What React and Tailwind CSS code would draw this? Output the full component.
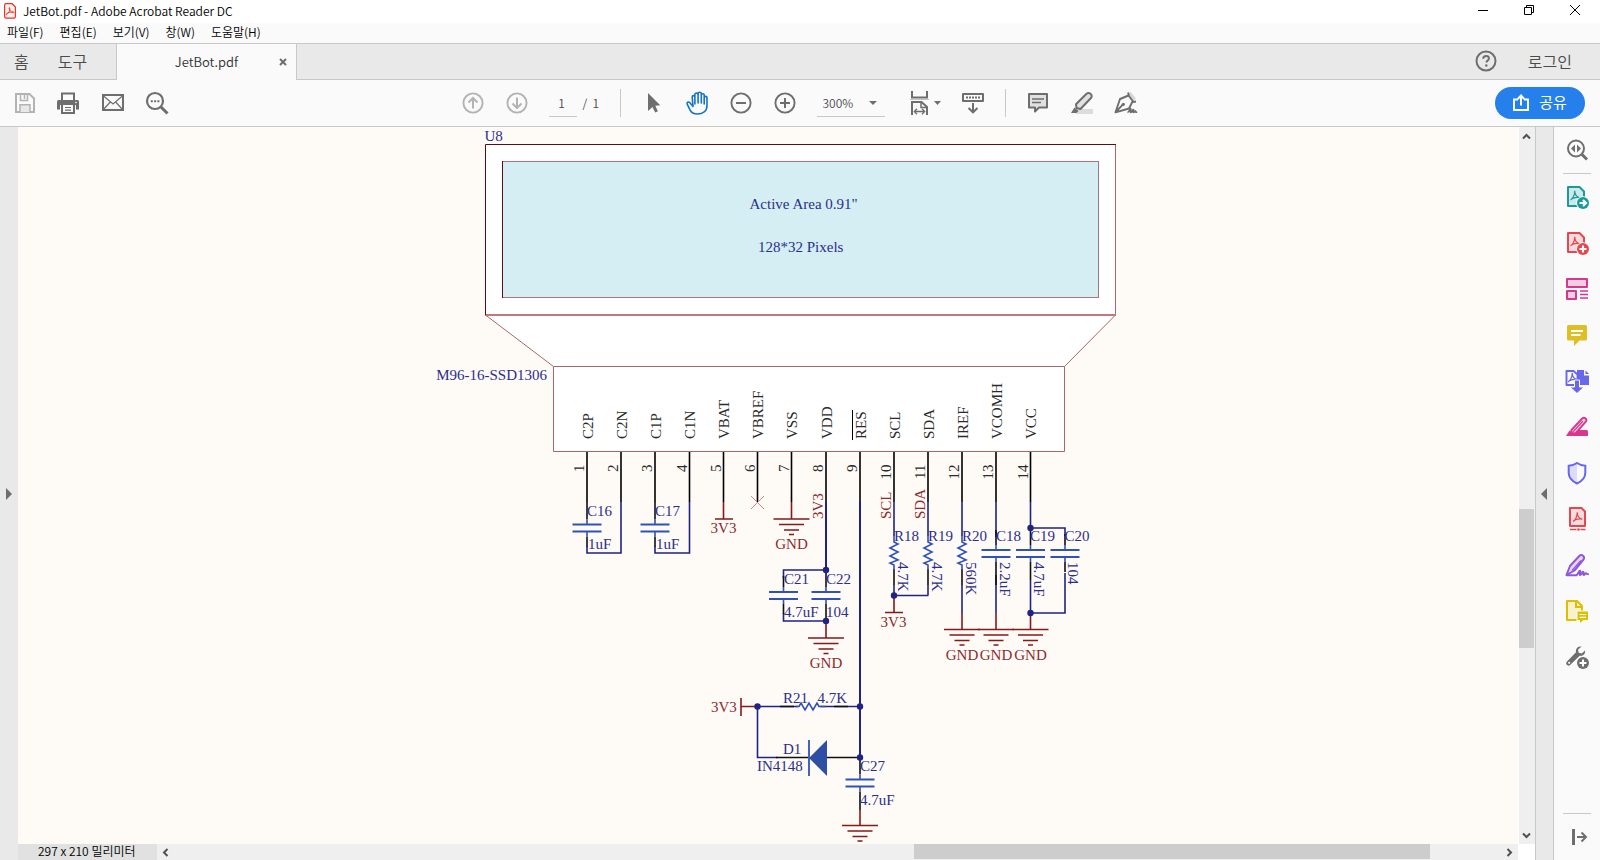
import React from 'react';

/* ---------- shared pieces ---------- */

function IconButton({ label, children, className = 'w-11' }) {
  return (
    <button type="button" aria-label={label} className={`flex h-full shrink-0 items-center justify-center ${className}`}>
      {children}
    </button>
  );
}

function Svg({ size = 24, children, className = '' }) {
  return (
    <svg width={size} height={size} viewBox={`0 0 ${size} ${size}`} fill="none" className={className} aria-hidden="true">
      {children}
    </svg>
  );
}

const G = '#6e6e6e';

/* ---------- title, menu and tabs ---------- */

function TitleBar() {
  return (
    <header className="flex h-[23px] shrink-0 items-start bg-white pl-1 pr-0.5 text-black">
      <svg width="12" height="16" viewBox="0 0 12 16" fill="none" className="mt-[3px]" aria-hidden="true">
        <path d="M2 .7h6L11.4 4v9.6a1.6 1.6 0 0 1-1.6 1.6H2.2A1.6 1.6 0 0 1 .6 13.600V2.200A1.500 1.500 0 0 1 2 .7z" fill="#fff3f1" stroke="#ee3124" strokeWidth="1.200" />
        <path d="M2.500 11.400c1.400-.5 3.700-3.600 3.400-6.200-.2-1-1-.6-.7.4.4 1.800 2.200 4 4 4.200.9 0 .9-.9 0-1-1.700-.2-5 .8-6.500 1.800-.6.4-.7.9-.2.8z" stroke="#ee3124" strokeWidth=".9" />
      </svg>
      <h1 className="flex-1 pl-[7px] text-[12px] font-[350] leading-[22px]">JetBot.pdf - Adobe Acrobat Reader DC</h1>
      <div className="flex h-5">
        <IconButton label="최소화" className="w-[46px]">
          <Svg size={12}><path d="M1 6.500h10" stroke="#000" /></Svg>
        </IconButton>
        <IconButton label="이전 크기로 복원" className="w-[46px]">
          <Svg size={12}>
            <path d="M1.500 3.500h7v7h-7zM3.500 3.500v-2h7v7h-2" stroke="#000" />
          </Svg>
        </IconButton>
        <IconButton label="닫기" className="w-[46px]">
          <Svg size={12}><path d="M1 1l10 10M11 1L1 11" stroke="#000" /></Svg>
        </IconButton>
      </div>
    </header>
  );
}

function MenuBar() {
  return (
    <nav className="flex h-5 shrink-0 items-start gap-4 bg-[#fafafa] pl-[7px] text-[12px] font-[350] leading-[18px] text-black">
      {['파일(F)', '편집(E)', '보기(V)', '창(W)', '도움말(H)'].map((m) => (
        <button key={m} type="button">{m}</button>
      ))}
    </nav>
  );
}

function TabBar() {
  return (
    <div className="flex h-[37px] shrink-0 border-t border-[#c8c8c8] bg-[#e9e9e9] font-[350] text-[#4b4b4b]">
      <div className="flex w-[117px] items-center gap-[29px] border-b border-r border-[#c8c8c8] pb-0.5 pl-3.5 text-[16px] leading-6">
        <button type="button">홈</button>
        <button type="button">도구</button>
      </div>
      <div className="flex w-[179px] items-center bg-[#fafafa]">
        <button type="button" className="flex-1 pl-[18px] text-center text-[13px] leading-6 text-[#323232]">JetBot.pdf</button>
        <button type="button" aria-label="탭 닫기" className="mr-2 flex h-6 w-2.5 items-center justify-center">
          <Svg size={8}><path d="M1 1l6 6M7 1L1 7" stroke={G} strokeWidth="2" /></Svg>
        </button>
      </div>
      <div className="flex flex-1 items-center justify-end gap-[31px] border-b border-l border-[#c8c8c8] pb-0.5 pr-7">
        <button type="button" aria-label="도움말">
          <Svg size={22}>
            <circle cx="11" cy="11" r="9.500" stroke={G} strokeWidth="2" />
            <path d="M8.200 8.700c.1-1.700 1.300-2.600 2.900-2.600s2.800.9 2.800 2.300c0 2-2.400 2.200-2.400 4" stroke={G} strokeWidth="2" />
            <circle cx="11.300" cy="15.500" r="1.200" fill={G} />
          </Svg>
        </button>
        <button type="button" className="text-[16px] leading-6">로그인</button>
      </div>
    </div>
  );
}

/* ---------- toolbar ---------- */

function SaveIcon() {
  return (
    <Svg>
      <path d="M3 3h13.500L21 7.500V21H3z" stroke="#b3b3b3" strokeWidth="2" />
      <path d="M7.500 3v6.500h7V3M11.500 4v4" stroke="#b3b3b3" strokeWidth="1.500" />
      <path d="M7 21v-7.200h10V21" fill="#e8e8e8" stroke="#b3b3b3" strokeWidth="1.500" />
    </Svg>
  );
}
function PrintIcon() {
  return (
    <Svg>
      <path d="M5 9V2.500h12V9" stroke={G} strokeWidth="2" />
      <path d="M1.500 9h19A1.500 1.500 0 0 1 22 10.500v8h-3V14H3v4.500H0v-8A1.500 1.500 0 0 1 1.500 9z" fill={G} />
      <path d="M5 14v8h12v-8" fill="#fafafa" stroke={G} strokeWidth="2" />
      <path d="M8 16.500h6M8 19.200h6" stroke={G} strokeWidth="1.200" />
      <circle cx="19" cy="11.500" r=".8" fill="#fff" />
    </Svg>
  );
}
function MailIcon() {
  return (
    <Svg>
      <path d="M2 4h20v15H2z" stroke={G} strokeWidth="2" />
      <path d="M2 4.500l10 8.500 10-8.500M2.500 18.500L9.300 11M21.500 18.500L14.700 11" stroke={G} strokeWidth="1.200" />
    </Svg>
  );
}
function FindIcon() {
  return (
    <Svg>
      <circle cx="10" cy="10" r="8" stroke={G} strokeWidth="2.200" />
      <path d="M15.500 15.500l7 7" stroke={G} strokeWidth="3" />
      <path d="M5.800 9.200h2v2h-2zM9.100 9.200h2v2h-2zM12.400 9.200h2v2h-2z" fill={G} />
    </Svg>
  );
}
function Circled({ color = G, d }) {
  return (
    <Svg>
      <circle cx="12" cy="12" r="9.600" stroke={color} strokeWidth="1.900" />
      <path d={d} stroke={color} strokeWidth="2" />
    </Svg>
  );
}
function HandIcon() {
  return (
    <Svg>
      <path
        d="M8 15.500L4.700 11.600c-1.200-1.300-3.300-.1-2.500 1.600l2.900 5.900c1.400 2.600 3.700 3.900 7.200 3.900 5.300 0 9.700-2.700 9.700-8.500V6.800c0-1.900-2.700-1.900-2.800 0V13M19.200 7.500V4.100c0-1.900-2.900-1.900-2.900 0V12M16.300 5V2.600c0-1.900-3.200-1.900-3.200 0V12M13.100 4V3.500c0-1.900-3.200-1.900-3.200 0V13M9.900 6c0-1.900-2.700-1.900-2.700.1l.8 9.400"
        stroke="#1473c8" strokeWidth="1.600" strokeLinejoin="round" strokeLinecap="round"
      />
    </Svg>
  );
}

function Toolbar() {
  return (
    <div className="grid h-[47px] shrink-0 grid-cols-[1fr_auto_1fr] items-center border-b border-[#c8c8c8] bg-[#fafafa] text-[#4b4b4b]">
      <div className="flex h-11 pl-[3px]">
        <IconButton label="저장"><SaveIcon /></IconButton>
        <IconButton label="인쇄"><PrintIcon /></IconButton>
        <IconButton label="전자 메일"><MailIcon /></IconButton>
        <IconButton label="찾기"><FindIcon /></IconButton>
      </div>

      <div className="flex h-11 items-center pr-0.5 text-[12px] font-[350]">
        <IconButton label="이전 페이지"><Circled color="#b3b3b3" d="M12 17.500V7.500M7.500 11.500L12 7l4.500 4.500" /></IconButton>
        <IconButton label="다음 페이지"><Circled color="#b3b3b3" d="M12 6.500v10M7.500 12.500L12 17l4.500-4.500" /></IconButton>
        <input aria-label="페이지 번호" defaultValue="1" className="ml-2.5 h-7 w-7 border-b border-[#c8c8c8] bg-transparent pr-0.5 text-center outline-none" />
        <span className="w-[43px] whitespace-pre pl-1.5">/  1</span>
        <span className="mr-2.5 h-7 w-px bg-[#c8c8c8]" />
        <IconButton label="선택 도구">
          <Svg><path d="M7 2v18l4.500-4 2.700 5.500 2.700-1.300-2.600-5.400 4.900-.6z" fill={G} /></Svg>
        </IconButton>
        <IconButton label="손 도구"><HandIcon /></IconButton>
        <IconButton label="축소"><Circled d="M7 12h10" /></IconButton>
        <IconButton label="확대"><Circled d="M7 12h10M12 7v10" /></IconButton>
        <div className="relative mx-2.5 h-7 w-[68px] border-b border-[#c8c8c8]">
          <select aria-label="확대/축소 비율" defaultValue="300%" className="h-full w-full appearance-none bg-transparent pl-1.5 outline-none">
            <option>100%</option>
            <option>200%</option>
            <option>300%</option>
          </select>
          <svg width="8" height="4" viewBox="0 0 8 4" className="pointer-events-none absolute right-2 top-3" aria-hidden="true">
            <path d="M0 0h8L4 4z" fill={G} />
          </svg>
        </div>
        <IconButton label="페이지 맞춤" className="w-14 pl-1">
          <svg width="32" height="26" viewBox="0 0 32 26" fill="none" aria-hidden="true">
            <path d="M3 1v6.500h15V1" stroke={G} strokeWidth="2" />
            <path d="M1 9.500h19" stroke="#c4c4c4" />
            <path d="M3 25V12h9.500l5.500 5v8" stroke={G} strokeWidth="2" />
            <path d="M12 12v5.500h6" stroke={G} strokeWidth="1.500" />
            <path d="M5.500 21.500h10M8 18.800l-2.700 2.700L8 24.200M13 18.800l2.700 2.700-2.700 2.700" stroke={G} strokeWidth="1.300" />
            <path d="M25 11h7l-3.500 4z" fill={G} />
          </svg>
        </IconButton>
        <IconButton label="읽기 모드">
          <Svg>
            <path d="M2 3h20v7H2z" stroke={G} strokeWidth="2" strokeLinejoin="round" />
            <path d="M5 6.500h14" stroke={G} strokeWidth="2" strokeDasharray="2 1" />
            <path d="M12 12v9M7.500 17l4.500 4.300 4.500-4.300" stroke={G} strokeWidth="2" />
          </Svg>
        </IconButton>
        <span className="mx-2.5 h-7 w-px bg-[#c8c8c8]" />
        <IconButton label="스티커 메모 추가">
          <Svg>
            <path d="M3 3h18v13.500h-8l-4 4v-4H3z" fill="#e1e1e1" stroke={G} strokeWidth="2" strokeLinejoin="round" />
            <path d="M6 8h12M6 11.500h9" stroke={G} strokeWidth="1.300" />
          </Svg>
        </IconButton>
        <IconButton label="텍스트 강조 표시">
          <Svg>
            <path d="M6 18h17v5H6z" fill="#dcdcdc" />
            <path d="M6 13.200L16.500 2.800c2.700-2.200 6.400.9 4.700 4L10.500 18l-4-1z" fill="#e1e1e1" stroke={G} strokeWidth="2" strokeLinejoin="round" />
            <path d="M4.500 16.500l4 3.500-2 2H1z" fill={G} />
          </Svg>
        </IconButton>
        <IconButton label="서명">
          <Svg>
            <path d="M13.500 3.500l3-2.500 5.500 6.500-2.500 2.300z" fill="#d6d6d6" />
            <path d="M14 1.500l1 3M14.500 4.500L6 8 1.500 21.300l13.500-3.800 3.500-7M14.500 4.500l5 6.500 2.500-.5M1.500 21.300l7-7.500" stroke={G} strokeWidth="1.900" strokeLinejoin="round" />
            <circle cx="9.300" cy="13.300" r="1.600" fill={G} />
            <path d="M13.500 21.500c2-.5 2.300-4.500 3.100-4 1 .5-1 3.800.2 4s1.500-3.300 2.500-3-.8 3 .3 3 1.300-2 1.800-1.500-.3 1.500 1.800 1.200" stroke={G} strokeWidth="1.700" />
          </Svg>
        </IconButton>
      </div>

      <div className="flex justify-end pr-[15px]">
        <button type="button" className="flex h-8 w-[90px] items-center justify-center gap-2.5 rounded-full bg-[#2680eb] pb-0.5 text-[15px] leading-6 text-white">
          <svg width="16" height="17" viewBox="0 0 16 17" fill="none" aria-hidden="true">
            <path d="M5 5.500H1V16h14V5.500h-4M8 11.500V2M4.800 5L8 1.500 11.200 5" stroke="#fff" strokeWidth="1.900" />
          </svg>
          공유
        </button>
      </div>
    </div>
  );
}

/* ---------- schematic ---------- */

const NAVY = '#1f2383';
const INK = '#2b2f8a';
const BLUE = '#3052b8';
const RED = '#85191b';
const RED_INK = '#8e2a2e';

const pins = [
  [587, 'C2P'], [621, 'C2N'], [655, 'C1P'], [689.5, 'C1N'], [723.5, 'VBAT'], [757.5, 'VBREF'], [791.5, 'VSS'],
  [826, 'VDD'], [860, 'RES'], [894, 'SCL'], [928, 'SDA'], [962, 'IREF'], [996, 'VCOMH'], [1030.5, 'VCC'],
];

function T({ x, y, r, anchor, fill = INK, children }) {
  return (
    <text x={x} y={y} fill={fill} textAnchor={anchor} transform={r ? `rotate(${r} ${x} ${y})` : undefined}>
      {children}
    </text>
  );
}

function Wire({ d, c = NAVY, w = 1.600 }) {
  return <path d={d} stroke={c} strokeWidth={w} fill="none" />;
}

function Cap({ x, y, top, bottom }) {
  return (
    <g>
      <Wire c="#101010" d={`M${x} ${top}V${y - 5}M${x} ${y + 12}V${bottom}`} />
      <Wire c={BLUE} d={`M${x} ${y - 5}V${y}M${x} ${y + 7}V${y + 12}`} />
      <Wire c={BLUE} w={1.800} d={`M${x - 14.500} ${y}h29M${x - 14.500} ${y + 7}h29`} />
    </g>
  );
}

function Gnd({ x, y, from, label = true }) {
  return (
    <g>
      <Wire c={RED} d={`M${x} ${from}V${y}`} />
      <Wire c={RED} d={`M${x - 18} ${y}h36M${x - 12.500} ${y + 5.500}h25M${x - 7.500} ${y + 11}h15M${x - 2.500} ${y + 15.500}h5`} />
      {label && <T x={x} y={y + 30} anchor="middle" fill={RED_INK}>GND</T>}
    </g>
  );
}

function Resistor({ x, top, bottom }) {
  return (
    <g>
      <Wire d={`M${x} ${top}V536`} />
      <Wire c="#101010" d={`M${x} 569V585`} />
      <Wire d={`M${x} 585V${bottom}`} />
      <Wire c={BLUE} d={`M${x} 534v8l4 2-8 4 8 4-8 4 8 4-8 3 4 2v5`} />
    </g>
  );
}

function Dot({ x, y }) {
  return <circle cx={x} cy={y} r="3.200" fill={NAVY} />;
}

function Schematic() {
  return (
    <svg viewBox="18 127 1500 717" className="block w-full font-['Liberation_Serif',serif] text-[15px]" role="img" aria-label="M96-16-SSD1306">
      <path d="M485.500 144.500H1115.500V315L1064.500 366.500V451.500H553.500V366.500L485.500 315z" fill="#fff" />
      <rect x="502.500" y="161.500" width="596" height="136" fill="#d4eef4" stroke="#a8757c" />
      <path d="M502.500 161v137" stroke="#5a0d13" />
      <path d="M1115.500 144v171M553.500 451.500v-85h511v85zM485.500 315l68 51.500M1115.500 315l-51 51.500" fill="none" stroke="#a8686b" />
      <path d="M485 315h631" stroke="#c07a7a" strokeWidth="2" />
      <path d="M485.500 315V144.500H1116" fill="none" stroke="#5a0d13" />

      <T x={484.5} y={141}>U8</T>
      <T x={749.5} y={209}>Active Area 0.91"</T>
      <T x={758} y={251.5}>128*32 Pixels</T>
      <T x={547} y={380} anchor="end">M96-16-SSD1306</T>

      {pins.map(([x, name], i) => (
        <g key={name}>
          <Wire c="#000" d={`M${x} 452V502`} />
          <T x={x + 5.5} y={439} r={-90} fill="#2a2a2a">{name}</T>
          <T x={x - 3} y={464.5} r={-90} anchor="end" fill="#2a2a2a">{i + 1}</T>
        </g>
      ))}
      <path d="M852.500 410v30" stroke="#000" />

      {/* charge pump capacitors */}
      <Cap x={587} y={524.500} top={502} bottom={547} />
      <Wire d="M587 546v7h34V502" />
      <T x={587} y={515.5}>C16</T>
      <T x={588} y={549}>1uF</T>
      <Cap x={655} y={524.500} top={502} bottom={547} />
      <Wire d="M655 546v7h34.500V502" />
      <T x={655} y={515.5}>C17</T>
      <T x={656} y={549}>1uF</T>

      {/* VBAT, VBREF, VSS */}
      <Wire c={RED} d="M723.500 502v17M715 519h18" />
      <T x={723.5} y={532.5} anchor="middle" fill={RED_INK}>3V3</T>
      <path d="M751 496l13 13M764 496l-13 13" stroke="#d58289" />
      <Gnd x={791.5} y={519} from={502} />

      {/* VDD decoupling */}
      <Wire w={2} d="M826 502v68" />
      <Wire d="M826 570h-42.500v8M783.500 613v8h42.500" />
      <T x={823} y={519} r={-90} fill={RED_INK}>3V3</T>
      <Cap x={783.5} y={592} top={576} bottom={614} />
      <Cap x={826} y={592} top={570} bottom={621} />
      <Gnd x={826} y={638} from={621} />
      <Dot x={826} y={570} />
      <Dot x={826} y={621} />
      <T x={784} y={583.5}>C21</T>
      <T x={826} y={583.5}>C22</T>
      <T x={784} y={617}>4.7uF</T>
      <T x={826} y={617}>104</T>

      {/* I2C pull-ups */}
      <Resistor x={894} top={502} bottom={595} />
      <Resistor x={928} top={502} bottom={595} />
      <Wire d="M894 595.500h34.500" />
      <Wire c={RED} d="M894 595v17M885 612.500h18" />
      <Dot x={894} y={595.5} />
      <T x={890.5} y={519} r={-90} fill={RED_INK}>SCL</T>
      <T x={925} y={519} r={-90} fill={RED_INK}>SDA</T>
      <T x={894} y={541}>R18</T>
      <T x={928} y={541}>R19</T>
      <T x={898} y={562} r={90}>4.7K</T>
      <T x={932} y={562} r={90}>4.7K</T>
      <T x={893.5} y={626.5} anchor="middle" fill={RED_INK}>3V3</T>

      {/* IREF, VCOMH, VCC */}
      <Resistor x={962} top={502} bottom={613} />
      <Wire d="M996 502v35M996 575v38M1030.500 502v26h34.500v8M1030.500 580v33h34.500v-40" />
      <Cap x={996} y={550} top={530} bottom={585} />
      <Cap x={1030.5} y={550} top={528} bottom={580} />
      <Cap x={1065} y={550} top={534} bottom={572} />
      <Gnd x={962} y={629.500} from={613} />
      <Gnd x={996} y={629.500} from={613} />
      <Gnd x={1030.5} y={629.500} from={613} />
      <Dot x={1030.5} y={528} />
      <Dot x={1030.5} y={613} />
      <T x={962} y={541}>R20</T>
      <T x={996} y={541}>C18</T>
      <T x={1030} y={541}>C19</T>
      <T x={1064.5} y={541}>C20</T>
      <T x={965.5} y={562} r={90}>560K</T>
      <T x={999.5} y={562} r={90}>2.2uF</T>
      <T x={1033.5} y={562} r={90}>4.7uF</T>
      <T x={1067.5} y={562} r={90}>104</T>

      {/* reset network */}
      <Wire w={2} d="M860 502v256" />
      <Wire d="M757.500 706V757.500h20M757.500 706.500H798M820 706.500h40" />
      <Wire c="#101010" d="M776 757.500h32M827 757.500h33M780 706.500h14M834 706.500h14" />
      <Wire c={BLUE} d="M796 706.500h3l2-3.500 4 7 4-7 4 7 4-7 2 3.500h6" />
      <Wire c={RED} d="M741 698v18M741 706.500h16" />
      <path d="M809 758l18-18v36z" fill="#2f4fa5" />
      <Wire c={BLUE} w={1.800} d="M809 740v36" />
      <Cap x={860} y={779.500} top={758} bottom={810} />
      <Gnd x={860} y={825.500} from={810} label={false} />
      <Dot x={757.500} y={706.5} />
      <Dot x={860} y={706.5} />
      <Dot x={860} y={757.500} />
      <T x={711} y={712} fill={RED_INK}>3V3</T>
      <T x={783} y={703}>R21</T>
      <T x={817.5} y={703}>4.7K</T>
      <T x={783} y={754}>D1</T>
      <T x={757} y={771}>IN4148</T>
      <T x={860} y={771}>C27</T>
      <T x={860} y={805}>4.7uF</T>
    </svg>
  );
}

/* ---------- scroll bars ---------- */

function Chevron({ d }) {
  return <Svg size={9}><path d={d} stroke="#505050" strokeWidth="2" /></Svg>;
}

function HorizontalBar() {
  return (
    <div className="flex h-4 shrink-0 bg-[#efefef]">
      <div className="w-[139px] bg-[#e1e1e1] pl-5 text-[12px] font-[350] leading-[14px] text-black">297 x 210 밀리미터</div>
      <button type="button" aria-label="왼쪽으로 스크롤" className="flex w-4 items-center justify-center"><Chevron d="M6.500 1L3 4.500 6.500 8" /></button>
      <div className="flex-[741]" />
      <div className="mb-px flex-[516] bg-[#cdcdcd]" />
      <div className="flex-[71]" />
      <button type="button" aria-label="오른쪽으로 스크롤" className="flex w-[17px] items-center justify-center"><Chevron d="M2.500 1L6 4.500 2.500 8" /></button>
    </div>
  );
}

function VerticalBar() {
  return (
    <div className="flex w-[17px] shrink-0 flex-col bg-white pb-4 pl-px">
      <div className="flex flex-1 flex-col bg-[#efefef]">
        <button type="button" aria-label="위로 스크롤" className="flex h-[18px] items-center justify-center pr-0.5"><Chevron d="M1 6.500L4.500 3 8 6.500" /></button>
        <div className="flex-[364]" />
        <div className="mr-px flex-[139] bg-[#cdcdcd]" />
        <div className="flex-[178]" />
        <button type="button" aria-label="아래로 스크롤" className="flex h-[18px] items-center justify-center pr-0.5"><Chevron d="M1 2.500L4.500 6 8 2.500" /></button>
      </div>
    </div>
  );
}

/* ---------- tools pane ---------- */

function Acro({ c, x = 0, y = 0 }) {
  return (
    <path
      transform={`translate(${x} ${y})`}
      d="M0 9.500c2.300-1 4.300-5 4.200-9.200M4.200.3c.1 3.600 2 6.200 5 7M.6 8.800C3 7 6 6.600 9.300 7.200"
      stroke={c} strokeWidth="1.200"
    />
  );
}

function PageBadge({ c, fill, d }) {
  return (
    <Svg>
      <path d="M3 2h11.500L19 6.500V21H3z" fill={fill} stroke={c} strokeWidth="2" strokeLinejoin="round" />
      <Acro c={c} x={5.500} y={5.500} />
      <circle cx="18" cy="18" r="6.800" fill="#fafafa" />
      <circle cx="18" cy="18" r="6" fill={c} />
      <path d={d} stroke="#fff" strokeWidth="2.100" />
    </Svg>
  );
}

const tools = [
  ['PDF 내보내기', <PageBadge c="#1a9a9a" fill="#cfe9e8" d="M14.500 18h6M18 15l3 3-3 3" />],
  ['PDF 만들기', <PageBadge c="#e34850" fill="#f8dcdd" d="M14.500 18h7M18 14.500v7" />],
  ['페이지 구성', (
    <Svg>
      <path d="M2 2h20v8H2zM2 14h9v8H2z" fill="#f4cde2" stroke="#d83790" strokeWidth="2" strokeLinejoin="round" />
      <path d="M15 14h8M15 17.500h8M15 21h8" stroke="#d83790" strokeWidth="1.300" />
    </Svg>
  )],
  ['주석', (
    <Svg>
      <path d="M3.500 2h17a1.500 1.500 0 0 1 1.500 1.500V16a1.500 1.500 0 0 1-1.500 1.500h-6L9 23v-5.500H3.500A1.500 1.500 0 0 1 2 16V3.500A1.500 1.500 0 0 1 3.500 2z" fill="#e0bf25" />
      <path d="M6 8h12M6 12h9.500" stroke="#fff" strokeWidth="1.800" />
    </Svg>
  )],
  ['파일 결합', (
    <Svg>
      <path d="M12 1h7v5.500h5V16H12z" fill="#6767ec" />
      <path d="M20.500 1.500L24 5h-3.500z" fill="#6767ec" />
      <path d="M1.500 2H8.500l4 3.500V16h-11z" fill="#fafafa" stroke="#6767ec" strokeWidth="1.900" strokeLinejoin="round" />
      <Acro c="#6767ec" x={3} y={3.500} />
      <path d="M9.500 11h5v7H19l-7 6.500L5 18h4.500z" fill="#6767ec" stroke="#fafafa" />
    </Svg>
  )],
  ['교정', (
    <Svg>
      <path d="M11 17.500l2-2.500h8.500A1.500 1.500 0 0 1 23 16.500V21H7z" fill="#d83790" />
      <path d="M6.500 15L17.200 3.500c2.400-2 5.400.8 3.600 3.200L10.300 18.500 6 18z" fill="#f8dfec" stroke="#d83790" strokeWidth="1.900" strokeLinejoin="round" />
      <path d="M7.500 17.500L18 6" stroke="#d83790" strokeWidth="1.200" />
      <path d="M4.500 15.500L10 20l-3 1H1z" fill="#d83790" />
    </Svg>
  )],
  ['보호', (
    <Svg>
      <path d="M12 2v20.500C6.700 20 3.700 16.600 3.700 12V4.700C7 4.500 9.500 3.800 12 2z" fill="#dcdcf8" />
      <path d="M12 2c2.500 1.800 5 2.500 8.300 2.700V12c0 4.600-3 8-8.300 10.500C6.700 20 3.700 16.600 3.700 12V4.700C7 4.500 9.500 3.800 12 2z" stroke="#6767ec" strokeWidth="2" />
    </Svg>
  )],
  ['PDF 압축', (
    <Svg>
      <path d="M5 1h11.500L20 4.500V19H5z" fill="#f8dcdd" stroke="#e34850" strokeWidth="2" strokeLinejoin="round" />
      <Acro c="#e34850" x={8} y={5} />
      <path d="M5 22.500h6.500M15.500 22.500h5" stroke="#e34850" strokeWidth="1.300" />
      <circle cx="13.500" cy="22.500" r="1.300" fill="#e34850" />
    </Svg>
  )],
  ['작성 및 서명', (
    <Svg>
      <path d="M5 13L14.500 2.800c2.800-2 5.700 1 4 3.700L9.500 17.500l-8 4.500z" fill="#e6d9f8" stroke="#9256d9" strokeWidth="2" strokeLinejoin="round" />
      <path d="M7 17.500l9-10" stroke="#9256d9" strokeWidth="1.200" />
      <path d="M1.500 22.300h9c3 0 3.200-5 4.500-4.600s-1.300 4.400.3 4.400 1.700-3.700 2.900-3.300-.6 3.200.7 3.200 1-2 2-1.900.4 1.400 3 1" stroke="#9256d9" strokeWidth="1.900" />
    </Svg>
  )],
  ['검토용으로 전송', (
    <Svg>
      <path d="M2 2h10l5 5v14H2z" fill="#f8f1cf" stroke="#dfbf00" strokeWidth="2" strokeLinejoin="round" />
      <path d="M11 2v6h6" stroke="#dfbf00" strokeWidth="2" />
      <path d="M11.500 11.500H24V22h-5l-4 3v-3h-3.500z" fill="#fafafa" />
      <path d="M12.500 12.500H23V21h-4.500l-3.500 3v-3h-2.500z" fill="#dfbf00" />
      <path d="M14.500 15.500h6.500M14.500 18.300h6.500" stroke="#fff" strokeWidth="1.200" />
    </Svg>
  )],
  ['도구 더 보기', (
    <Svg>
      <path d="M16.500 1.500c-3.300-.7-6.300 2-5.500 5.700L2 16.500c-2.400 2.500.9 5.700 3.400 3.300l9.300-9c3.700.7 6-2.300 5.300-5.300l-3.300 3-3-.7-.7-3z" fill={G} />
      <circle cx="4.200" cy="17.800" r="1.100" fill="#fafafa" />
      <circle cx="18" cy="18" r="6.800" fill="#fafafa" />
      <circle cx="18" cy="18" r="6" fill={G} />
      <path d="M14.500 18h7M18 14.500v7" stroke="#fff" strokeWidth="2.100" />
    </Svg>
  )],
];

function ToolsPane() {
  return (
    <aside className="flex w-[47px] shrink-0 flex-col items-center border-l border-[#c8c8c8] bg-[#fafafa]">
      <div className="flex h-[47px] w-7 items-center justify-center border-b border-[#c8c8c8]">
        <button type="button" aria-label="도구 검색">
          <Svg>
            <circle cx="11" cy="10.500" r="8" stroke={G} strokeWidth="2" />
            <path d="M16.500 16l5.500 5.500" stroke={G} strokeWidth="3" />
            <path d="M10 6.500v8l-4-4zM12 6.500v8l4-4z" fill={G} />
          </Svg>
        </button>
      </div>
      {tools.map(([name, icon]) => (
        <button key={name} type="button" aria-label={name} className="flex h-[46px] w-full shrink-0 items-center justify-center">{icon}</button>
      ))}
      <div className="flex-1" />
      <div className="flex h-[47px] w-7 items-center justify-center border-t border-[#c8c8c8]">
        <button type="button" aria-label="도구 창 축소">
          <Svg className="mr-0.5">
            <path d="M9.500 4v16" stroke={G} strokeWidth="3" />
            <path d="M13 12h8M17.500 7.500L22 12l-4.500 4.500" stroke={G} strokeWidth="2" />
          </Svg>
        </button>
      </div>
    </aside>
  );
}

export default function App() {
  return (
    <div className="flex h-screen flex-col overflow-hidden bg-white font-['Noto_Sans_CJK_KR',sans-serif]">
      <TitleBar />
      <MenuBar />
      <TabBar />
      <Toolbar />
      <div className="flex min-h-0 flex-1">
        <button type="button" aria-label="탐색 창 열기" className="flex w-[18px] shrink-0 items-center justify-center bg-[#e9e9e9]">
          <svg width="6" height="12" viewBox="0 0 6 12" aria-hidden="true"><path d="M0 0v12l6-6z" fill={G} /></svg>
        </button>
        <main className="flex min-w-0 flex-1 flex-col">
          <div className="min-h-0 flex-1 overflow-hidden bg-[#fefaf5]">
            <Schematic />
          </div>
          <HorizontalBar />
        </main>
        <VerticalBar />
        <button type="button" aria-label="도구 창 접기" className="flex w-[18px] shrink-0 items-center justify-center border-l border-[#c8c8c8] bg-[#e9e9e9] pr-0.5">
          <svg width="6" height="12" viewBox="0 0 6 12" aria-hidden="true"><path d="M6 0v12L0 6z" fill={G} /></svg>
        </button>
        <ToolsPane />
      </div>
    </div>
  );
}
